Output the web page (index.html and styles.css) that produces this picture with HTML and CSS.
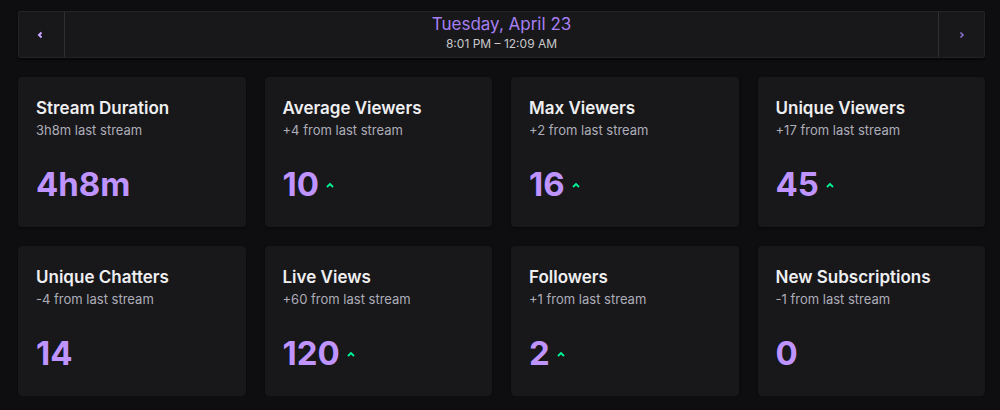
FILE: index.html
```html
<!DOCTYPE html>
<html>
<head>
<meta charset="utf-8">
<link rel="stylesheet" href="styles.css">
</head>
<body>
<div class="page">
  <div class="header">
    <button class="nav">
      <svg width="8" height="8" viewBox="0 0 8 8"><path d="M5.5 1.5 L3 4 L5.5 6.5" fill="none" stroke="#c9a6ff" stroke-width="2"/></svg>
    </button>
    <div class="date">
      <div class="day">Tuesday, April 23</div>
      <div class="time">8:01 PM – 12:09 AM</div>
    </div>
    <button class="nav">
      <svg width="8" height="8" viewBox="0 0 8 8"><path d="M2.5 1.5 L5 4 L2.5 6.5" fill="none" stroke="#8a6fd0" stroke-width="1.6"/></svg>
    </button>
  </div>
  <div class="grid">
    <div class="card"><div class="title">Stream Duration</div><div class="sub">3h8m last stream</div><div class="value">4h8m</div></div>
    <div class="card"><div class="title">Average Viewers</div><div class="sub">+4 from last stream</div><div class="value">10<span class="up"><svg width="8" height="6" viewBox="0 0 8 6"><path d="M1 5 L4 2 L7 5" fill="none" stroke="#00f593" stroke-width="1.8"/></svg></span></div></div>
    <div class="card"><div class="title">Max Viewers</div><div class="sub">+2 from last stream</div><div class="value">16<span class="up"><svg width="8" height="6" viewBox="0 0 8 6"><path d="M1 5 L4 2 L7 5" fill="none" stroke="#00f593" stroke-width="1.8"/></svg></span></div></div>
    <div class="card"><div class="title">Unique Viewers</div><div class="sub">+17 from last stream</div><div class="value">45<span class="up"><svg width="8" height="6" viewBox="0 0 8 6"><path d="M1 5 L4 2 L7 5" fill="none" stroke="#00f593" stroke-width="1.8"/></svg></span></div></div>
    <div class="card"><div class="title">Unique Chatters</div><div class="sub">-4 from last stream</div><div class="value">14</div></div>
    <div class="card"><div class="title">Live Views</div><div class="sub">+60 from last stream</div><div class="value">120<span class="up"><svg width="8" height="6" viewBox="0 0 8 6"><path d="M1 5 L4 2 L7 5" fill="none" stroke="#00f593" stroke-width="1.8"/></svg></span></div></div>
    <div class="card"><div class="title">Followers</div><div class="sub">+1 from last stream</div><div class="value">2<span class="up"><svg width="8" height="6" viewBox="0 0 8 6"><path d="M1 5 L4 2 L7 5" fill="none" stroke="#00f593" stroke-width="1.8"/></svg></span></div></div>
    <div class="card"><div class="title">New Subscriptions</div><div class="sub">-1 from last stream</div><div class="value">0</div></div>
  </div>
</div>
</body>
</html>
```

FILE: styles.css
```css
* { box-sizing: border-box; }
html, body { margin: 0; background: #0e0e10; }
body { font-family: Inter, "Noto Sans", sans-serif; color: #efeff1; }
.page { padding: 11px 15px 0 18px; width: 1000px; }
.header {
  display: flex; height: 47px; background: #18181b;
  border: 1px solid #232326; border-radius: 2px;
  box-shadow: 0 2px 2px rgba(0,0,0,0.5);
}
.nav {
  width: 46px; flex: none; background: transparent; border: none;
  display: flex; align-items: center; justify-content: center; padding: 0;
}
.nav:first-child { border-right: 1px solid #2e2e33; padding-right: 4px; }
.nav:last-child { border-left: 1px solid #2e2e33; }
.date { flex: 1; text-align: center; padding-top: 2px; }
.day { color: #a77ff0; font-size: 17px; line-height: 21px; }
.time { color: #c8c8cc; font-size: 12px; line-height: 16px; margin-top: 1px; }
.grid {
  display: grid; grid-template-columns: repeat(4, 1fr);
  column-gap: 19px; row-gap: 19px; margin-top: 19px;
}
.card {
  height: 150px; background: #18181b; border-radius: 4px;
  padding: 21px 18px 0 18px;
  box-shadow: 0 1px 3px rgba(0,0,0,0.5);
}
.title { font-size: 17px; font-weight: 600; line-height: 20px; color: #efeff1; }
.sub { font-size: 13px; line-height: 17px; color: #adadb8; margin-top: 4px; }
.value {
  margin-top: 26px; font-size: 33px; font-weight: 700; line-height: 38px;
  color: #bf94ff; display: flex; align-items: center;
}
.up { display: inline-flex; margin-left: 7px; margin-top: 2px; }
```
